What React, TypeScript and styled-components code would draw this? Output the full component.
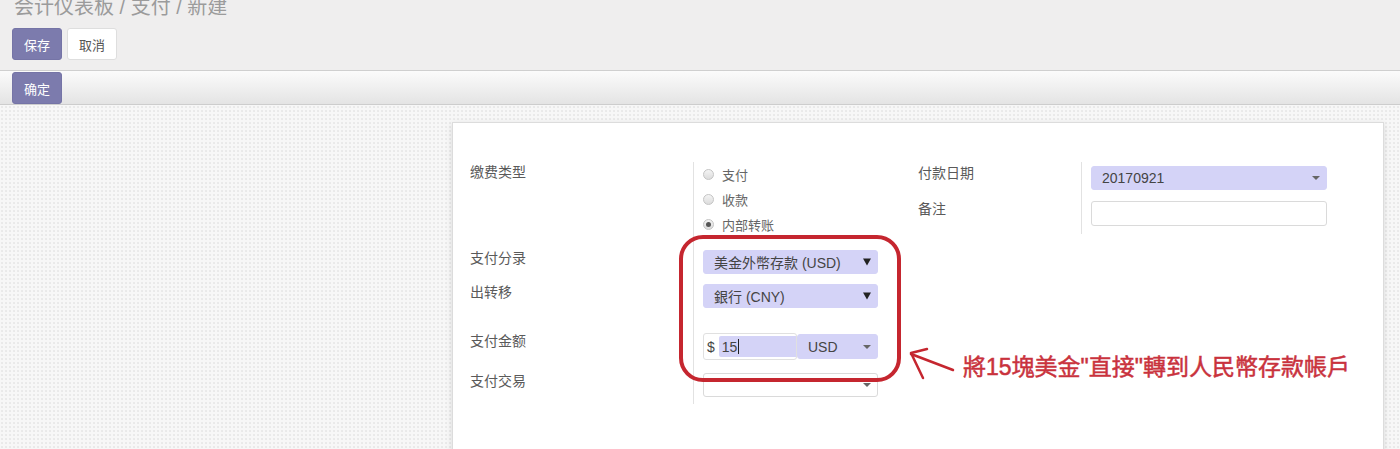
import React from 'react';
import styled, { createGlobalStyle } from 'styled-components';

const GlobalStyle = createGlobalStyle`
  html, body {
    margin: 0;
    padding: 0;
  }
  body {
    font-family: "Liberation Sans", "Noto Sans CJK SC", sans-serif;
    background: #f5f5f5;
    overflow: hidden;
  }
`;

const Page = styled.div`
  height: 449px;
  overflow: hidden;
  display: flex;
  flex-direction: column;
`;

const ControlPanel = styled.div`
  flex-shrink: 0;
  height: 70px;
  padding: 0 12px;
  background: #efeeee;
  border-bottom: 1px solid #cfcfcf;
`;

const Breadcrumb = styled.div`
  margin: -3px 0 0 2px;
  font-size: 20px;
  line-height: 20px;
  color: #9b9b9b;
  white-space: pre;
`;

const ButtonRow = styled.div`
  display: flex;
  gap: 5px;
  margin-top: 11px;
`;

const Button = styled.button<{ $primary?: boolean }>`
  width: 50px;
  height: 32px;
  padding: 0;
  border-radius: 3px;
  font-family: "Liberation Sans", "Noto Sans CJK SC", sans-serif;
  font-size: 13px;
  cursor: pointer;
  color: ${p => (p.$primary ? '#fff' : '#555')};
  background: ${p => (p.$primary ? '#7c7bad' : '#fff')};
  border: 1px solid ${p => (p.$primary ? '#7574a6' : '#dedede')};
`;

const StatusBar = styled.div`
  flex-shrink: 0;
  height: 34px;
  padding: 1px 12px 0;
  box-sizing: border-box;
  background: linear-gradient(#fbfbfb, #e4e4e4);
  border-bottom: 1px solid #cdcdcd;
`;

const SheetArea = styled.div`
  flex: 1;
  padding: 17px 0 0 452px;
  background-color: #f7f7f7;
  background-image: radial-gradient(circle, #e9e9e9 0.7px, transparent 1.1px);
  background-size: 4px 4px;
`;

const Sheet = styled.div`
  position: relative;
  width: 932px;
  min-height: 360px;
  box-sizing: border-box;
  padding: 39px 0 0 17px;
  background: #fff;
  border: 1px solid #dcdcdc;
  box-shadow: 0 2px 6px rgba(0, 0, 0, 0.12);
  display: flex;
  gap: 40px;
  align-items: flex-start;
`;

const Group = styled.div<{ $label: number; $field: number }>`
  display: grid;
  grid-template-columns: ${p => p.$label}px ${p => p.$field}px;
`;

const Label = styled.div<{ $pt?: number }>`
  padding-top: ${p => p.$pt ?? 0}px;
  font-size: 14px;
  line-height: 16px;
  color: #5a5a5a;
`;

const FieldCell = styled.div<{ $pt?: number; $pb?: number }>`
  border-left: 1px solid #e2e2e2;
  padding: ${p => p.$pt ?? 0}px 0 ${p => p.$pb ?? 0}px 9px;
`;

const RadioList = styled.div`
  display: flex;
  flex-direction: column;
`;

const RadioRow = styled.label`
  display: flex;
  align-items: center;
  height: 25px;
  font-size: 13px;
  color: #666;
`;

const RadioDot = styled.span<{ $checked?: boolean }>`
  position: relative;
  width: 11px;
  height: 11px;
  box-sizing: border-box;
  margin-right: 8px;
  border-radius: 50%;
  border: 1px solid #c4c4c4;
  background: linear-gradient(#f4f4f4, #dcdcdc);
  &::after {
    content: '';
    display: ${p => (p.$checked ? 'block' : 'none')};
    position: absolute;
    left: 2px;
    top: 2px;
    width: 5px;
    height: 5px;
    border-radius: 50%;
    background: #555;
  }
`;

const Select = styled.div<{ $fill?: boolean; $caret?: 'solid' | 'small'; $w?: number; $h?: number }>`
  position: relative;
  display: flex;
  align-items: center;
  width: ${p => p.$w ?? 175}px;
  height: ${p => p.$h ?? 24}px;
  box-sizing: border-box;
  padding-left: ${p => (p.$fill ? 10 : 9)}px;
  border-radius: 3px;
  font-size: 14px;
  color: #444;
  background: ${p => (p.$fill ? '#d4d3f7' : '#fff')};
  border: 1px solid ${p => (p.$fill ? '#d4d3f7' : '#dadada')};
  &::after {
    content: '';
    position: absolute;
    right: 6px;
    top: 50%;
    border-left: 4px solid transparent;
    border-right: 4px solid transparent;
    border-top: ${p => (p.$caret === 'solid' ? 7 : 4)}px solid ${p => (p.$caret === 'solid' ? '#222' : '#666')};
    transform: translateY(-50%);
  }
`;

const TextInput = styled.div<{ $w: number; $h: number }>`
  width: ${p => p.$w}px;
  height: ${p => p.$h}px;
  box-sizing: border-box;
  border: 1px solid #dadada;
  border-radius: 3px;
  background: #fff;
`;

const AmountWrap = styled.div`
  display: flex;
  align-items: center;
  width: 175px;
  height: 27px;
`;

const MoneyBox = styled.div`
  display: flex;
  align-items: center;
  width: 94px;
  height: 27px;
  box-sizing: border-box;
  padding: 1px 0 1px 3px;
  border: 1px solid #e0e0e0;
  border-radius: 3px;
  font-size: 14px;
  color: #444;
`;

const MoneyValue = styled.span`
  flex: 1;
  height: 21px;
  margin-left: 4px;
  padding-left: 3px;
  display: flex;
  align-items: center;
  background: #d4d3f7;
  border-radius: 2px 0 0 2px;
  &::after {
    content: '';
    width: 1px;
    height: 15px;
    margin-left: 1px;
    background: #222;
  }
`;

const Annotation = styled.div`
  position: absolute;
  left: 226px;
  top: 112px;
  width: 222px;
  height: 147px;
  box-sizing: border-box;
  border: 4px solid #c5262f;
  border-radius: 24px;
  pointer-events: none;
`;

const Callout = styled.div`
  position: absolute;
  left: 454px;
  top: 223px;
  display: flex;
  align-items: flex-end;
  gap: 8px;
`;

const CalloutText = styled.span`
  font-family: "Liberation Sans", "Noto Sans CJK TC", sans-serif;
  font-size: 23px;
  line-height: 26px;
  color: #c9323d;
  -webkit-text-stroke: 0.5px #c9323d;
  white-space: nowrap;
  margin-bottom: 2px;
`;

function Arrow() {
  return (
    <svg width="48" height="36" viewBox="0 0 48 36" fill="none">
      <path d="M4 8 L46 24" stroke="#c5262f" strokeWidth="2.5" strokeLinecap="round" />
      <path d="M20 3 L4 7 L16 32" stroke="#c5262f" strokeWidth="2.5" strokeLinecap="round" strokeLinejoin="round" />
    </svg>
  );
}

export default function App() {
  return (
    <Page>
      <GlobalStyle />
      <ControlPanel>
        <Breadcrumb>{'会计仪表板 / 支付 / 新建'}</Breadcrumb>
        <ButtonRow>
          <Button $primary>保存</Button>
          <Button>取消</Button>
        </ButtonRow>
      </ControlPanel>
      <StatusBar>
        <Button $primary>确定</Button>
      </StatusBar>
      <SheetArea>
        <Sheet>
          <Group $label={223} $field={185}>
            <Label $pt={2}>缴费类型</Label>
            <FieldCell $pb={13}>
              <RadioList>
                <RadioRow><RadioDot />支付</RadioRow>
                <RadioRow><RadioDot />收款</RadioRow>
                <RadioRow><RadioDot $checked />内部转账</RadioRow>
              </RadioList>
            </FieldCell>

            <Label>支付分录</Label>
            <FieldCell $pb={10}>
              <Select $fill $caret="solid">美金外幣存款 (USD)</Select>
            </FieldCell>

            <Label>出转移</Label>
            <FieldCell $pb={25}>
              <Select $fill $caret="solid">銀行 (CNY)</Select>
            </FieldCell>

            <Label>支付金额</Label>
            <FieldCell $pb={13}>
              <AmountWrap>
                <MoneyBox>
                  $<MoneyValue>15</MoneyValue>
                </MoneyBox>
                <Select $fill $caret="small" $w={81} $h={25}>USD</Select>
              </AmountWrap>
            </FieldCell>

            <Label>支付交易</Label>
            <FieldCell $pb={7}>
              <Select $caret="small" />
            </FieldCell>
          </Group>

          <Group $label={163} $field={246}>
            <Label $pt={3}>付款日期</Label>
            <FieldCell $pt={4} $pb={11}>
              <Select $fill $caret="small" $w={236}>20170921</Select>
            </FieldCell>

            <Label>备注</Label>
            <FieldCell $pb={8}>
              <TextInput $w={236} $h={25} />
            </FieldCell>
          </Group>

          <Annotation />
          <Callout>
            <Arrow />
            <CalloutText>將15塊美金"直接"轉到人民幣存款帳戶</CalloutText>
          </Callout>
        </Sheet>
      </SheetArea>
    </Page>
  );
}
